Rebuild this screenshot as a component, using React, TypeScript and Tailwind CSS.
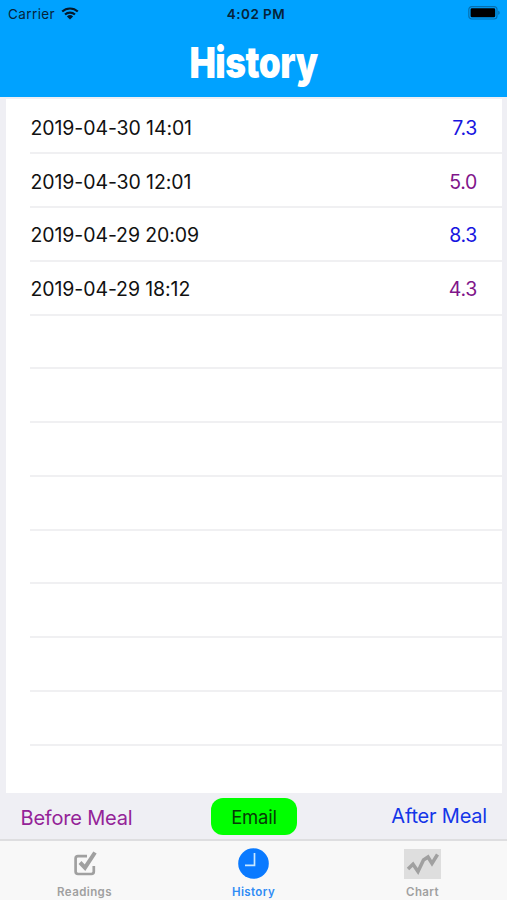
import React from 'react'

interface IReading {
  date: string
  value: string
  beforeMeal: boolean
}

const readings: IReading[] = [
  { date: '2019-04-30 14:01', value: '7.3', beforeMeal: false },
  { date: '2019-04-30 12:01', value: '5.0', beforeMeal: true },
  { date: '2019-04-29 20:09', value: '8.3', beforeMeal: false },
  { date: '2019-04-29 18:12', value: '4.3', beforeMeal: true },
]

const EMPTY_ROWS = 8

const StatusBar: React.FC = () => (
  <div className="grid h-[27px] grid-cols-3 items-center pt-px pl-2 pr-[6px] text-[13.5px] text-[#06243a]">
    <div className="flex items-center gap-[6px]">
      <span className="tracking-[0.4px]">Carrier</span>
      <svg
        className="-mt-[2px]"
        width="18"
        height="13"
        viewBox="0 0 18 13"
        fill="none"
      >
        <path
          d="M1.2 4.6a11.2 11.2 0 0 1 15.6 0M4 7.6a7.2 7.2 0 0 1 10 0"
          stroke="#04192b"
          strokeWidth="2.1"
        />
        <path d="M9 12.6 5.9 9.5a4.5 4.5 0 0 1 6.2 0z" fill="#04192b" />
      </svg>
    </div>
    <span className="pl-[3px] text-center text-[13.5px] font-semibold tracking-[0.45px]">
      4:02 PM
    </span>
    <svg className="-mt-[2px] justify-self-end" width="33" height="14" viewBox="0 0 33 14">
      <rect
        x="0.8"
        y="0.6"
        width="28.2"
        height="12.4"
        rx="3"
        fill="none"
        stroke="#0570b0"
        strokeWidth="1.2"
      />
      <rect x="2.6" y="2.3" width="24.6" height="9" rx="1.4" fill="#000" />
      <path d="M30.2 4.8c2 .6 2 3.4 0 4z" fill="#0570b0" />
    </svg>
  </div>
)

const Row: React.FC<{ reading?: IReading }> = ({ reading }) => (
  <div className="ml-6 flex h-[53.75px] items-center justify-between border-b-2 border-[#f0f0f2] pt-[4px] pr-[25px] text-[19.5px]">
    {reading && (
      <>
        <span className="pl-[0.5px] tracking-[-0.1px] text-[#111]">{reading.date}</span>
        <span
          className={
            reading.beforeMeal
              ? 'tracking-[-0.3px] text-[#80158a]'
              : 'tracking-[-0.3px] text-[#1715e0]'
          }
        >
          {reading.value}
        </span>
      </>
    )}
  </div>
)

interface TabProps {
  label: string
  active?: boolean
  children: React.ReactNode
}

const Tab: React.FC<TabProps> = ({ label, active, children }) => (
  <div
    className={`flex flex-col items-center ${
      active ? 'text-[#2f8cf5]' : 'text-[#a0a0a0]'
    }`}
  >
    <div className="flex h-[45px] items-center">{children}</div>
    <span className="text-[11.5px] leading-[13px] font-semibold tracking-[0.4px]">
      {label}
    </span>
  </div>
)

const App: React.FC = () => {
  return (
    <div className="flex h-[900px] w-[507px] flex-col overflow-hidden bg-[#efeff4] font-['Inter','Liberation_Sans',sans-serif]">
      <header className="h-[97px] shrink-0 bg-[#00a2ff]">
        <StatusBar />
        <h1 className="origin-center scale-x-[0.82] text-center text-[43px] leading-[70px] font-black tracking-[-0.6px] text-white">
          History
        </h1>
      </header>

      <main className="mt-[2px] mr-[5px] ml-[6px] h-[694px] shrink-0 overflow-hidden bg-white pt-[1.5px]">
        {readings.map((reading) => (
          <Row key={reading.date} reading={reading} />
        ))}
        {Array.from({ length: EMPTY_ROWS }, (_, i) => (
          <Row key={i} />
        ))}
      </main>

      <div className="grid h-[46px] shrink-0 grid-cols-3 items-start px-5 text-[20px] leading-[24px] tracking-[-0.2px]">
        <span className="mt-[13px] pl-[0.5px] text-[#942398]">Before Meal</span>
        <button className="mt-[5px] ml-px h-[37px] w-[86px] justify-self-center rounded-[12px] bg-[#00ff00] text-[18.5px] text-[#073b07]">
          Email
        </button>
        <span className="mt-[11px] justify-self-end whitespace-nowrap text-[#1436e8]">
          After Meal
        </span>
      </div>

      <nav className="grid grow grid-cols-3 border-t-2 border-[#dedee0] bg-[#f8f8f8]">
        <Tab label="Readings">
          <svg width="24" height="26" viewBox="0 0 24 26" fill="none" stroke="#a0a0a0">
            <path
              d="M14 5.200H5A2.400 2.400 0 0 0 2.600 7.600v13A2.400 2.400 0 0 0 5 23h13.400a2.400 2.400 0 0 0 2.400-2.400V15"
              strokeWidth="2.700"
            />
            <path d="m7 11.500 5 5.200L22 1.500" strokeWidth="4" />
          </svg>
        </Tab>
        <Tab label="History" active>
          <svg width="31" height="31" viewBox="0 0 31 31">
            <circle cx="15.500" cy="15.500" r="15.300" fill="#0a7aff" />
            <path d="M16.500 5v12.300H7" fill="none" stroke="#c9e8ff" strokeWidth="1.700" />
          </svg>
        </Tab>
        <Tab label="Chart">
          <svg width="37" height="30" viewBox="0 0 37 30">
            <rect width="37" height="30" fill="#dedede" />
            <path
              d="m4 20 5-4.800 5 7.300 5.500-11.500 4.500-3 4 6.500L33.500 5.500"
              fill="none"
              stroke="#a0a0a0"
              strokeWidth="3.500"
            />
          </svg>
        </Tab>
      </nav>
    </div>
  )
}

export default App
